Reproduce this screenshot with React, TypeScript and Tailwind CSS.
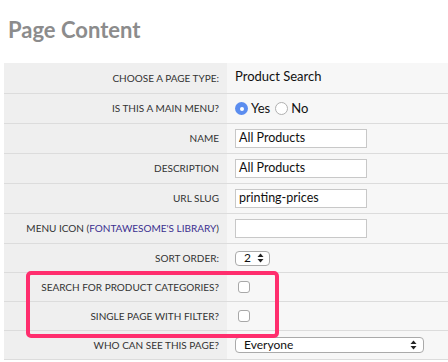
import React from "react";

const font = { fontFamily: "Lato, 'Open Sans', sans-serif" };

const Row = ({
   label,
   children,
   h,
}: {
   label: React.ReactNode;
   children?: React.ReactNode;
   h: string;
}) => (
   <div className={`grid grid-cols-[223px_1fr] border-b border-[#dcdcdc] ${h}`}>
      <div className="flex items-center justify-end bg-[#efefef] pr-2 text-[10px] uppercase text-[#333]">
         {label}
      </div>
      <div className="flex items-center bg-[#f7f7f7] pl-2 text-[13px] text-[#111]">
         {children}
      </div>
   </div>
);

const TextBox = ({ value }: { value: string }) => (
   <div className="flex h-[19px] w-[132px] items-center border border-[#c8c8c8] bg-white px-[3px] text-[12.5px] text-[#111]">
      {value}
   </div>
);

const Arrows = () => (
   <svg width="7" height="10" viewBox="0 0 7 10" className="fill-[#222]">
      <path d="M3.5 0.5 L6.5 4 L0.5 4 Z" />
      <path d="M3.5 9.5 L6.5 6 L0.5 6 Z" />
   </svg>
);

const Check = () => (
   <div className="ml-[3px] h-[12px] w-[12px] rounded-[3px] border border-[#a8a8a8] bg-white" />
);

export default function App() {
   return (
      <div className="h-[362px] w-[448px] overflow-hidden bg-white" style={font}>
         <h1 className="pl-2 pt-[15px] text-[22px] font-bold leading-[29px] text-[#8c8c8c]">
            Page Content
         </h1>
         <div className="relative ml-1 mt-[19px]">
            <Row label="Choose a page type:" h="h-[31px]">
               <span className="pb-[2px]">Product Search</span>
            </Row>
            <Row label="Is this a main menu?" h="h-[30px]">
               <div className="flex items-center gap-[3px]">
                  <span className="flex h-[13px] w-[13px] items-center justify-center rounded-full bg-[#5b8def]">
                     <span className="h-[4px] w-[4px] rounded-full bg-white" />
                  </span>
                  <span className="mr-[2px]">Yes</span>
                  <span className="h-[13px] w-[13px] rounded-full border border-[#b0b0b0] bg-white" />
                  <span>No</span>
               </div>
            </Row>
            <Row label="Name" h="h-[30px]">
               <TextBox value="All Products" />
            </Row>
            <Row label="Description" h="h-[30px]">
               <TextBox value="All Products" />
            </Row>
            <Row label="URL Slug" h="h-[30px]">
               <TextBox value="printing-prices" />
            </Row>
            <Row
               label={
                  <span>
                     Menu Icon (<span className="text-[#3b2f8f]">FontAwesome's Library</span>)
                  </span>
               }
               h="h-[30px]"
            >
               <TextBox value="" />
            </Row>
            <Row label="Sort order:" h="h-[29px]">
               <div className="flex h-[15px] w-[35px] items-center justify-between rounded-[4px] border border-[#aaa] bg-white pl-[8px] pr-[5px] text-[12px]">
                  <span>2</span>
                  <Arrows />
               </div>
            </Row>
            <Row label="Search for product categories?" h="h-[29px]">
               <Check />
            </Row>
            <Row label="Single page with filter?" h="h-[29px]">
               <Check />
            </Row>
            <Row label="Who can see this page?" h="h-[29px]">
               <div className="flex h-[16px] w-[189px] items-center justify-between rounded-[4px] border border-[#aaa] bg-white pl-[8px] pr-[6px] text-[12px]">
                  <span>Everyone</span>
                  <Arrows />
               </div>
            </Row>
            <div className="absolute left-[22px] top-[208px] h-[67px] w-[253px] rounded-[5px] border-[4px] border-[#ff2e6e]" />
         </div>
      </div>
   );
}
